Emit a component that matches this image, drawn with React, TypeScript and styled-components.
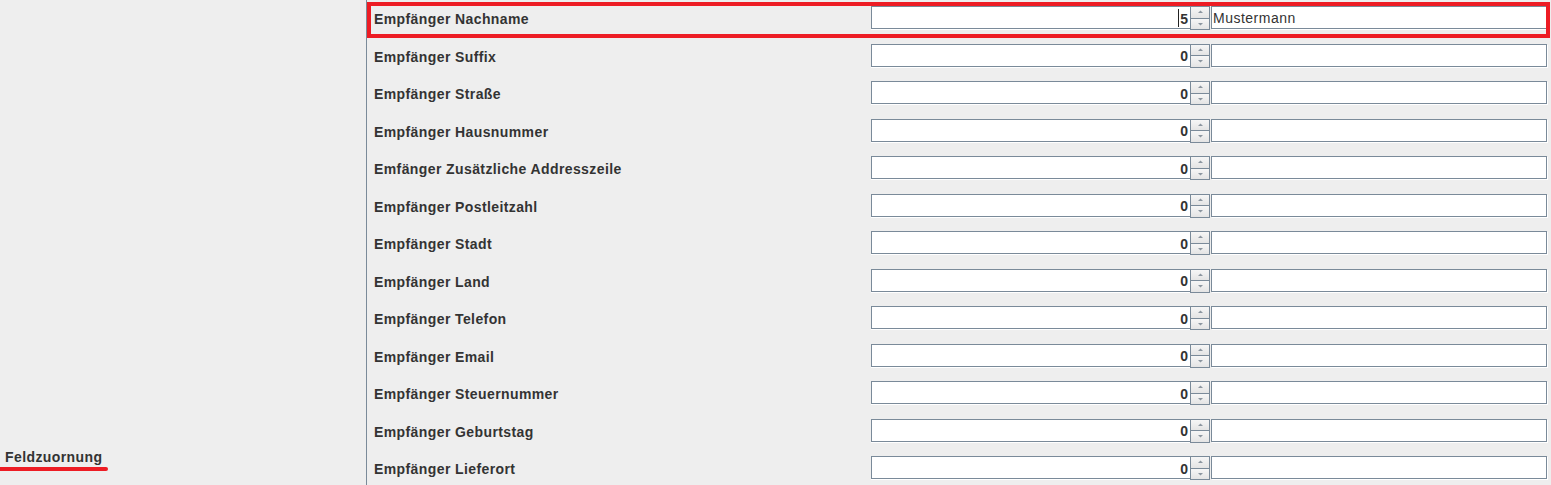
import React from 'react';
import styled, { createGlobalStyle } from 'styled-components';

const GlobalStyle = createGlobalStyle`
    html, body {
        margin: 0;
        padding: 0;
        background: #eeeeee;
        overflow: hidden;
    }
    body {
        font-family: "Liberation Sans", Arial, sans-serif;
        color: #333333;
    }
`;

const Page = styled.div`
    display: flex;
    width: 1551px;
    height: 485px;
    overflow: hidden;
    background: #eeeeee;
`;

const SidePanel = styled.div`
    width: 367px;
    flex-shrink: 0;
    border-right: 1px solid #7a8a99;
    display: flex;
    flex-direction: column;
    justify-content: flex-end;
    padding-bottom: 14px;
    box-sizing: border-box;
`;

const TabLabel = styled.div`
    font-weight: bold;
    font-size: 14px;
    letter-spacing: 0.4px;
    line-height: 16px;
    padding-left: 5px;
    color: #333333;
`;

const TabUnderline = styled.div`
    width: 108px;
    height: 4px;
    margin-top: 2px;
    border-radius: 0 2px 2px 0;
    background: #ed1c24;
`;

const RowList = styled.div`
    flex: 1;
    display: flex;
    flex-direction: column;
`;

const Row = styled.div<{ $highlight?: boolean }>`
    position: relative;
    height: 37.5px;
    flex-shrink: 0;
    display: grid;
    grid-template-columns: 497px 319px 20px 337px;
    padding-left: 7px;
    box-sizing: border-box;

    ${({ $highlight }) => $highlight && `
        &::after {
            content: '';
            position: absolute;
            top: 2px;
            left: 0;
            right: 1px;
            height: 36px;
            border: 4px solid #ed1c24;
            box-sizing: border-box;
            pointer-events: none;
        }
    `}
`;

const Label = styled.div`
    align-self: center;
    font-weight: bold;
    font-size: 14px;
    letter-spacing: 0.4px;
    line-height: 16px;
    margin-top: 1px;
    color: #333333;
    white-space: nowrap;
`;

const NumberField = styled.div`
    align-self: start;
    margin-top: 6px;
    height: 23px;
    box-sizing: border-box;
    border: 1px solid #7a8a99;
    border-right: none;
    background: #ffffff;
    box-shadow: 0 1px 0 #ffffff;
    display: flex;
    align-items: center;
    justify-content: flex-end;
    padding-right: 2px;
    padding-top: 2px;
    font-weight: bold;
    font-size: 14px;
    color: #333333;
`;

const Caret = styled.span`
    display: inline-block;
    width: 1px;
    height: 18px;
    background: #222222;
    margin-right: 1px;
    margin-top: -2px;
`;

const Spinner = styled.div`
    align-self: start;
    margin-top: 6px;
    height: 24px;
    box-sizing: border-box;
    border: 1px solid #7a8a99;
    display: flex;
    flex-direction: column;
`;

const SpinButton = styled.div<{ $down?: boolean }>`
    flex: 1;
    display: flex;
    align-items: center;
    justify-content: center;
    background: linear-gradient(#f6f6f6, #e4e4e4);
    border-top: ${({ $down }) => ($down ? '1px solid #7a8a99' : 'none')};
`;

const TextField = styled.div`
    align-self: start;
    margin-top: 6px;
    margin-left: 1px;
    height: 23px;
    box-sizing: border-box;
    border: 1px solid #7a8a99;
    background: #ffffff;
    box-shadow: 1px 1px 0 #ffffff;
    display: flex;
    align-items: center;
    padding-left: 1px;
    padding-top: 1px;
    font-size: 14px;
    letter-spacing: 0.5px;
    color: #333333;
`;

const Arrow = ({ down }: { down?: boolean }) => (
    <svg width="7" height="4" viewBox="0 0 7 4">
        <path d={down ? 'M1 1 L6 1 L3.5 3.5 Z' : 'M1 3 L6 3 L3.5 0.5 Z'} fill="#8c96a0" />
    </svg>
);

type rowType = {
    label: string,
    value: number,
    text?: string,
    active?: boolean,
}

const rows: rowType[] = [
    { label: 'Empfänger Nachname', value: 5, text: 'Mustermann', active: true },
    { label: 'Empfänger Suffix', value: 0 },
    { label: 'Empfänger Straße', value: 0 },
    { label: 'Empfänger Hausnummer', value: 0 },
    { label: 'Emfänger Zusätzliche Addresszeile', value: 0 },
    { label: 'Empfänger Postleitzahl', value: 0 },
    { label: 'Empfänger Stadt', value: 0 },
    { label: 'Empfänger Land', value: 0 },
    { label: 'Empfänger Telefon', value: 0 },
    { label: 'Empfänger Email', value: 0 },
    { label: 'Empfänger Steuernummer', value: 0 },
    { label: 'Empfänger Geburtstag', value: 0 },
    { label: 'Empfänger Lieferort', value: 0 },
];

const App = () => {
    return (
        <Page>
            <GlobalStyle />
            {/*linke Seite mit Reiter*/}
            <SidePanel>
                <TabLabel>Feldzuornung</TabLabel>
                <TabUnderline />
            </SidePanel>
            {/*Feldzuordnung Zeilen*/}
            <RowList>
                {rows.map((row) =>
                    <Row key={row.label} $highlight={row.active}>
                        <Label>{row.label}</Label>
                        <NumberField>
                            {row.active && <Caret />}
                            {row.value}
                        </NumberField>
                        <Spinner>
                            <SpinButton><Arrow /></SpinButton>
                            <SpinButton $down><Arrow down /></SpinButton>
                        </Spinner>
                        <TextField>{row.text}</TextField>
                    </Row>
                )}
            </RowList>
        </Page>
    );
};

export default App;
